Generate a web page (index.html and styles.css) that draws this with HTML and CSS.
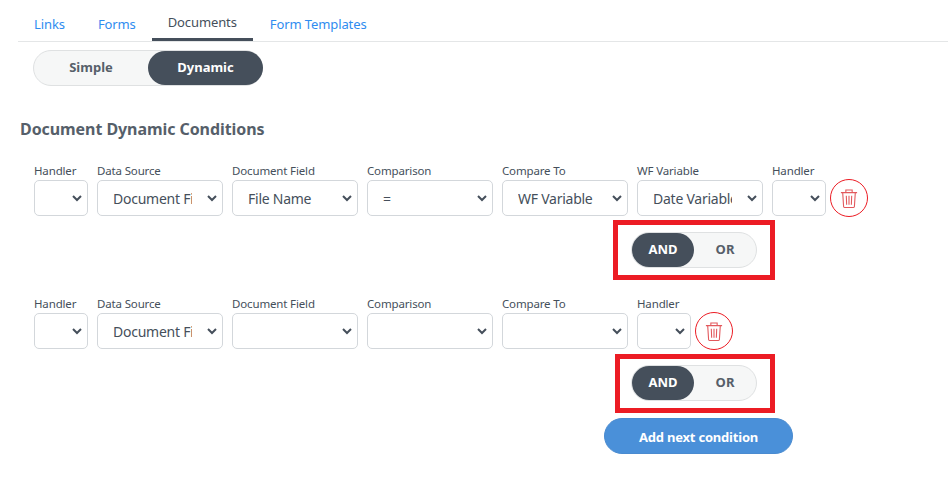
FILE: index.html
```html
<!DOCTYPE html>
<html lang="en">
<head>
    <meta charset="UTF-8">
    <title>Document Dynamic Conditions</title>
    <link rel="stylesheet" href="styles.css">
</head>
<body>
<nav class="tabs">
    <a class="tab" href="#">Links</a>
    <a class="tab" href="#">Forms</a>
    <a class="tab active" href="#">Documents</a>
    <a class="tab" href="#">Form Templates</a>
</nav>

<div class="switch mode-switch">
    <span class="switch-item">Simple</span>
    <span class="switch-item on">Dynamic</span>
</div>

<h2 class="title">Document Dynamic Conditions</h2>

<div class="row">
    <label class="field narrow">Handler<select><option></option></select></label>
    <label class="field">Data Source<select><option>Document Field</option></select></label>
    <label class="field">Document Field<select><option>File Name</option></select></label>
    <label class="field">Comparison<select><option>=</option></select></label>
    <label class="field">Compare To<select><option>WF Variable</option></select></label>
    <label class="field">WF Variable<select><option>Date Variable</option></select></label>
    <label class="field narrow">Handler<select><option></option></select></label>
    <button class="trash" type="button" aria-label="Delete">
        <svg width="18" height="21" viewBox="0 0 20 22" fill="none" stroke="#e2585c" stroke-width="1.2">
            <path d="M1 4.5h18M6.5 4.5V1.5h7v3M3 4.5l1 15.5a1 1 0 0 0 1 1h10a1 1 0 0 0 1-1l1-15.5M7 8l.4 10M10 8v10M13 8l-.4 10"/>
        </svg>
    </button>
</div>
<div class="join first">
    <div class="switch logic-switch marked">
        <span class="switch-item on">AND</span>
        <span class="switch-item">OR</span>
    </div>
</div>

<div class="row second">
    <label class="field narrow">Handler<select><option></option></select></label>
    <label class="field">Data Source<select><option>Document Field</option></select></label>
    <label class="field">Document Field<select><option></option></select></label>
    <label class="field">Comparison<select><option></option></select></label>
    <label class="field">Compare To<select><option></option></select></label>
    <label class="field narrow">Handler<select><option></option></select></label>
    <button class="trash" type="button" aria-label="Delete">
        <svg width="18" height="21" viewBox="0 0 20 22" fill="none" stroke="#e2585c" stroke-width="1.2">
            <path d="M1 4.5h18M6.5 4.5V1.5h7v3M3 4.5l1 15.5a1 1 0 0 0 1 1h10a1 1 0 0 0 1-1l1-15.5M7 8l.4 10M10 8v10M13 8l-.4 10"/>
        </svg>
    </button>
</div>
<div class="join last">
    <div class="switch logic-switch marked">
        <span class="switch-item on">AND</span>
        <span class="switch-item">OR</span>
    </div>
    <button class="add" type="button">Add next condition</button>
</div>
</body>
</html>
```

FILE: styles.css
```css
* {
    box-sizing: border-box;
}

body {
    margin: 0;
    padding: 0 0 0 18px;

    font-family: "Noto Sans", sans-serif;
    font-size: 13px;
    color: #454f5b;
    background: #fff;
}

.tabs {
    display: flex;

    height: 42px;
    padding-left: 16px;

    border-bottom: 1px solid #e4e6e7;
}

.tab {
    margin-right: 33px;
    padding-top: 15px;

    font-size: 13px;
    letter-spacing: -.1px;
    text-decoration: none;
    color: #2f8cf0;
}

.tab.active {
    width: 101px;
    height: 41px;
    margin: 0 17px 0 -17px;
    padding-top: 13px;

    text-align: center;
    color: #454f5b;
    border-bottom: 3px solid #454f5b;
}

.switch {
    display: flex;

    background: #f6f7f7;
    border: 1px solid #dfe1e2;
    border-radius: 18px;
}

.switch-item {
    display: flex;
    align-items: center;
    justify-content: center;
    flex: 1;

    padding-bottom: 2px;

    font-weight: 700;
    color: #565f6a;
    border-radius: 18px;
}

.switch-item.on {
    color: #fff;
    background: #454f5b;
}

.mode-switch {
    width: 230px;
    height: 36px;
    margin: 8px 0 0 15px;
}

.mode-switch .switch-item {
    flex: 0 0 114px;
}

.mode-switch .on {
    flex: 0 0 115px;
}

.title {
    margin: 32px 0 0 2px;

    font-size: 16px;
    line-height: 22px;
    letter-spacing: -.07px;
    color: #565f6a;
}

.row {
    display: flex;
    align-items: flex-end;
    gap: 9px;

    margin: 23px 0 0 16px;
}

.row.second {
    margin-top: 0;
}

.field {
    display: flex;
    flex-direction: column;
    gap: 2px;

    width: 126px;

    font-size: 11.5px;
    line-height: 15px;
    letter-spacing: -.15px;
    white-space: nowrap;
}

.field.narrow {
    width: 54px;
}

select {
    width: 100%;
    height: 36px;
    padding: 0 30px 0 15px;

    font-family: inherit;
    font-size: 14px;
    letter-spacing: -.25px;
    color: #454f5b;
    background: #fff url("data:image/svg+xml,%3Csvg xmlns='http://www.w3.org/2000/svg' width='10' height='7'%3E%3Cpath d='M1 1l4 4 4-4' fill='none' stroke='%23454f5b' stroke-width='2'/%3E%3C/svg%3E") no-repeat right 5px center;
    border: 1px solid #d3d7db;
    border-radius: 5px;
    appearance: none;
}

.trash {
    display: flex;
    align-items: center;
    justify-content: center;

    width: 38px;
    height: 38px;
    margin: 0 0 -1px -5px;
    padding: 0;

    background: #fff;
    border: 1px solid #ec1c24;
    border-radius: 50%;
}

.join {
    display: flex;
    flex-direction: column;
    align-items: flex-start;

    padding: 16px 0 0 613px;
}

.join.first {
    height: 80px;
}

.logic-switch {
    width: 126px;
    height: 36px;
}

.logic-switch .on {
    flex: 0 0 62px;
}

.marked {
    position: relative;
}

/* красная рамка аннотации */
.marked::after {
    content: '';

    position: absolute;
    top: -13px;
    right: -19px;
    bottom: -13px;
    left: -19px;

    pointer-events: none;

    border: 5px solid #ec1c24;
}

.last .marked::after {
    top: -12px;
    left: -17px;
}

.add {
    width: 189px;
    height: 36px;
    margin: 17px 0 0 -27px;
    padding-top: 2px;

    font-family: inherit;
    font-size: 13px;
    font-weight: 700;
    letter-spacing: -.2px;
    color: #fff;
    background: #4a90d9;
    border: 1px solid #4a8bd0;
    border-radius: 18px;
}
```
